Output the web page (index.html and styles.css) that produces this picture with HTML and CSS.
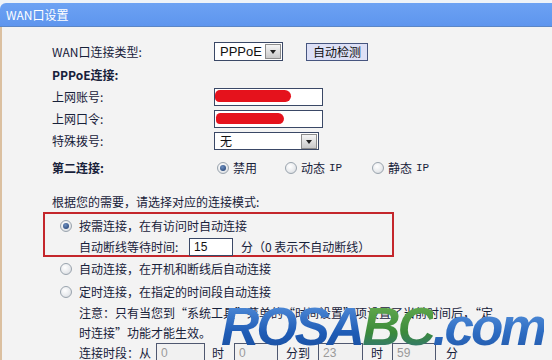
FILE: index.html
```html
<!DOCTYPE html>
<html lang="zh-CN">
<head>
<meta charset="utf-8">
<title>WAN口设置</title>
<link rel="stylesheet" href="styles.css">
</head>
<body>
<div class="page">
  <div class="hdr">WAN口设置</div>
  <div class="panel">
    <div class="row h23">
      <span class="lbl">WAN口连接类型:</span>
      <span class="sel sel-type"><span class="val">PPPoE</span><span class="arr"></span></span>
      <button class="btn">自动检测</button>
    </div>
    <div class="row h23"><span class="lbl bold">PPPoE连接:</span></div>
    <div class="row">
      <span class="lbl">上网账号:</span>
      <span class="inp inp-wide"><span class="blot blot-a"></span></span>
    </div>
    <div class="row">
      <span class="lbl">上网口令:</span>
      <span class="inp inp-wide"><span class="blot blot-b"></span></span>
    </div>
    <div class="row">
      <span class="lbl">特殊拨号:</span>
      <span class="sel sel-dial"><span class="val">无</span><span class="arr"></span></span>
    </div>
    <div class="row second">
      <span class="lbl bold">第二连接:</span>
      <span class="choice c1"><span class="radio on"></span>禁用</span>
      <span class="choice c2"><span class="radio"></span>动态<span class="mono"> IP</span></span>
      <span class="choice"><span class="radio"></span>静态<span class="mono"> IP</span></span>
    </div>
    <div class="row intro">根据您的需要，请选择对应的连接模式:</div>
    <div class="box">
      <div class="mode first"><span class="radio on"></span><span class="mtext">按需连接，在有访问时自动连接</span></div>
      <div class="wait">
        <span class="wlbl">自动断线等待时间:</span>
        <span class="inp inp-wait">15</span>
        <span class="unit">分</span>
        <span class="hint">（0 表示不自动断线）</span>
      </div>
    </div>
    <div class="mode m-auto"><span class="radio"></span><span class="mtext">自动连接，在开机和断线后自动连接</span></div>
    <div class="mode"><span class="radio"></span><span class="mtext">定时连接，在指定的时间段自动连接</span></div>
    <div class="note">注意：只有当您到“系统工具”菜单的“时间设置”项设置了当前时间后，“定<br>时连接”功能才能生效。</div>
    <div class="period">
      <span class="plbl">连接时段：从</span>
      <span class="inp dis w49">0</span>
      <span class="pu pu1">时</span>
      <span class="inp dis w44">0</span>
      <span class="pu pu2">分到</span>
      <span class="inp dis w45">23</span>
      <span class="pu pu3">时</span>
      <span class="inp dis w44">59</span>
      <span class="pu pu4">分</span>
    </div>
  </div>
  <div class="mark"><span class="mk-a">ROSA</span><span class="mk-b">BC</span><span class="mk-c">.com</span></div>
</div>
</body>
</html>
```
FILE: styles.css
```css
* { box-sizing: border-box; margin: 0; padding: 0; }
html, body { width: 552px; height: 360px; overflow: hidden; }
body {
  background: #eef3f8;
  font: 12px/1 "Noto Sans CJK SC", "Liberation Sans", sans-serif;
  color: #17213a;
}
.page { position: relative; height: 360px; padding-top: 3px; }
.hdr {
  height: 24px;
  background: linear-gradient(#6ca2f3, #5e95ee);
  border-bottom: 1px solid #5b86c6;
  border-radius: 6px 0 0 0;
  color: #fff;
  padding-left: 6px;
  display: flex;
  align-items: center;
  font-size: 12px;
}
.panel {
  height: 333px;
  background: #f3f3f3;
  border-left: 2px solid #dbc0a0;
  padding-top: 13px;
}
.row { display: flex; align-items: center; height: 22px; padding-left: 50px; }
.h23 { height: 23px; }
.lbl { width: 162px; flex: none; }
.bold { font-weight: bold; }
.mono { font-family: "Liberation Mono", monospace; font-size: 11px; }

.sel {
  display: flex; align-items: center; justify-content: space-between;
  height: 19px; border: 1px solid #3a4866; background: #fff;
  padding: 0 1px 0 5px;
}
.sel-type { width: 69px; font-family: "Liberation Sans", sans-serif; font-size: 13px; color: #111; }
.sel-dial { width: 105px; height: 18px; color: #111; }
.arr {
  width: 16px; height: 15px; position: relative;
  background: linear-gradient(#f6f6f6, #c9c9c9);
  border: 1px solid #8c8c8c;
}
.arr::after {
  content: ""; position: absolute; left: 4px; top: 5px;
  border-left: 3.5px solid transparent; border-right: 3.5px solid transparent;
  border-top: 4px solid #222;
}
.btn {
  margin-left: 23px; width: 62px; height: 18px;
  background: #dde0f6; border: 1px solid #46557f;
  font: 12px/1 "Noto Sans CJK SC", sans-serif; color: #111;
}
.inp {
  display: flex; align-items: center; position: relative; flex: none;
  height: 18px; border: 1px solid #3a4866; background: #fff;
  font-family: "Liberation Sans", sans-serif; font-size: 12px; color: #111;
  padding-left: 4px;
}
.inp-wide { width: 109px; }
.blot { position: absolute; background: #e5121c; border-radius: 7px 9px 8px 6px; }
.blot-a { left: 0; top: 1px; width: 76px; height: 12px; }
.blot-b { left: 1px; top: 2px; width: 68px; height: 11px; }

.second { margin-top: 5px; }
.choice { display: flex; align-items: center; gap: 4px; }
.c1 { margin-left: 3px; width: 68px; }
.c2 { width: 87px; }
.radio {
  display: inline-block; width: 12px; height: 12px; border-radius: 50%; flex: none;
  border: 1px solid #9aa4ae; position: relative;
  background: radial-gradient(circle at 40% 35%, #ffffff 0%, #e7e9ec 60%, #c9ced4 100%);
}
.radio.on::after {
  content: ""; position: absolute; left: 2px; top: 2px; width: 6px; height: 6px; border-radius: 50%;
  background: radial-gradient(circle at 40% 35%, #6d8fc0, #1d3a6c);
}
.intro { margin-top: 13px; height: 20px; }

.box {
  margin-left: 41px; width: 351px; height: 45px;
  border: 2px solid #c4262b; padding-left: 15px;
}
.mode { display: flex; align-items: center; gap: 7px; height: 22px; padding-left: 58px; }
.box .mode { padding-left: 0; height: 24px; }
.m-auto { height: 24px; }
.wait { display: flex; align-items: center; height: 17px; padding-left: 19px; }
.wlbl { width: 110px; }
.inp-wait { width: 44px; height: 18px; }
.unit { margin-left: 8px; }
.hint { margin-left: 0; }

.note { padding-left: 77px; line-height: 20px; }
.period { display: flex; align-items: center; height: 20px; padding-left: 77px; white-space: nowrap; }
.plbl { width: 77px; flex: none; }
.dis { height: 20px; background: #f1f1f1; color: #9a9a9a; border-color: #4f5870; }
.w49 { width: 49px; }
.w44 { width: 44px; }
.w45 { width: 45px; }
.pu { flex: none; }
.pu1 { margin-left: 7px; width: 22px; }
.pu2 { margin-left: 8px; width: 32px; }
.pu3 { margin-left: 8px; width: 21px; }
.pu4 { margin-left: 10px; }

.mark {
  position: absolute; left: 221px; top: 300px;
  font: italic 900 53px/1 "Liberation Sans", Arial, sans-serif;
  letter-spacing: -3px;
  white-space: nowrap;
}
.mark span {
  -webkit-background-clip: text; background-clip: text; color: transparent;
}
.mk-a { background-image: linear-gradient(#5c97e0, #1f5cb6 60%, #194c9a); }
.mk-b { background-image: linear-gradient(#6db153, #3b8a3a 60%, #2f6f8a); }
.mk-c { background-image: linear-gradient(#6aa3e6, #2d6cc2 60%, #2156a6); }
```
